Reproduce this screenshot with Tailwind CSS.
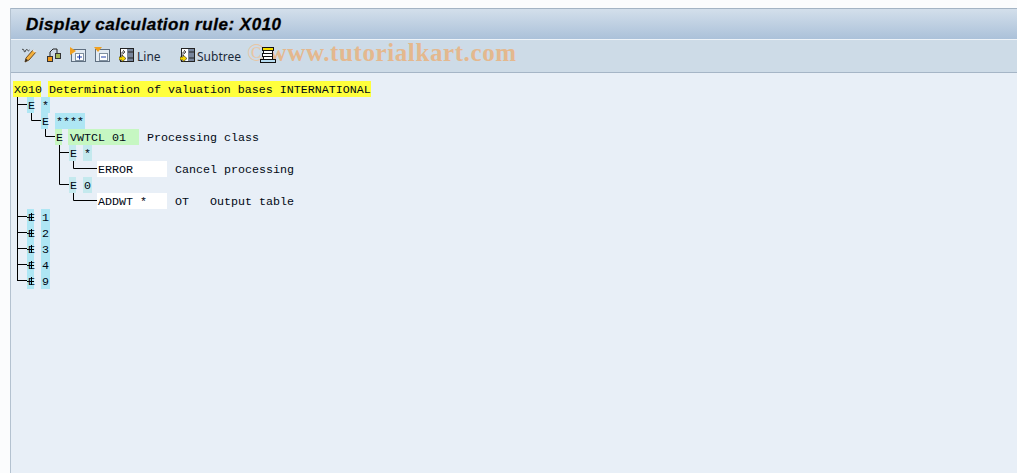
<!doctype html>
<html>
<head>
<meta charset="utf-8">
<script src="https://cdn.jsdelivr.net/npm/@tailwindcss/browser@4"></script>
</head>
<body class="bg-white overflow-hidden">
<div class="w-[1017px] h-[473px] overflow-hidden pl-[10px] pt-[8px] bg-[#fbfcfd]">
  <div class="h-[465px] flex flex-col border-l border-[#b4c2d0]">
    <div class="h-[31px] shrink-0 border-t border-[#a4b4c4] bg-gradient-to-b from-[#d3dfeb] to-[#abc1d9] pl-[15px] flex items-center">
      <span class="font-['Liberation_Sans'] font-bold italic text-[17px] tracking-[0.52px] text-black leading-none [-webkit-text-stroke:0.3px_black]">Display calculation rule: X010</span>
    </div>
    <div class="relative h-[34px] shrink-0 border-t border-[#eef3f8] border-b border-b-[#a5b5c6] bg-[#cddbe7] flex items-center pl-[11px] pb-[2px] font-['Noto_Sans'] text-[12px] text-[#1c2a3a]">
      <div class="absolute left-[236px] top-[-3px] font-['Liberation_Serif'] font-bold text-[25px] leading-[32px] tracking-[0.6px] whitespace-nowrap text-[#e4b88e]"><span class="font-normal text-[#e8c6a4] mr-[2px]">©</span>www.tutorialkart.com</div>
      <svg class="relative w-[16px] h-[16px] shrink-0" viewBox="0 0 16 16"><path d="M0 3c1-2 2 0 2 1s1.500 1 1.500 0 1-2 2-1 1 1 2 0" fill="none" stroke="#333" stroke-width="1"/><path d="M3 15l1-4 7-8 3 2-7 8z" fill="#f4b03c" stroke="#6b4a20"/><path d="M11 3l3 2" stroke="#e4e4e4" stroke-width="2"/><path d="M3 15l1-3 2 1z" fill="#222"/></svg>
      <svg class="relative w-[16px] h-[16px] shrink-0 ml-[8px]" viewBox="0 0 16 16"><path d="M4 9V5l3-3h4v4" fill="none" stroke="#222"/><rect x="1.500" y="9.500" width="5" height="5" fill="#f29a1c" stroke="#333"/><rect x="9.500" y="6.500" width="5" height="5" fill="#a3b855" stroke="#333"/></svg>
      <svg class="relative w-[16px] h-[16px] shrink-0 ml-[8px]" viewBox="0 0 16 16"><rect x="1.500" y="2.500" width="14" height="12" fill="#e3ebf3" stroke="#5f6f80"/><rect x="5.500" y="6.500" width="8" height="7" fill="#fff" stroke="#8090a0"/><path d="M9.500 7.500v5M7 10h5" stroke="#1f3fa8"/><path d="M0 0l6 4-6 4z" fill="#f0a020"/></svg>
      <svg class="relative w-[16px] h-[16px] shrink-0 ml-[8px]" viewBox="0 0 16 16"><rect x="1.500" y="2.500" width="14" height="12" fill="#e3ebf3" stroke="#5f6f80"/><rect x="5.500" y="6.500" width="8" height="7" fill="#fff" stroke="#8090a0"/><path d="M7 10h5" stroke="#1f3fa8"/><path d="M0 0h8l-4 5z" fill="#f0a020"/></svg>
      <svg class="relative w-[16px] h-[16px] shrink-0 ml-[9px]" viewBox="0 0 16 16"><rect x="1.500" y="1.500" width="13" height="13" fill="#fff" stroke="#222"/><rect x="8" y="2" width="6" height="12" fill="#77859c"/><path d="M9 5h5M9 11h5" stroke="#222"/><path d="M4 3l2 2-2 2M3 9V5h2" fill="none" stroke="#555"/><path d="M0 10h3V8l4 3.500-4 3.500v-2H0z" fill="#f5d400" stroke="#222" stroke-width=".6"/></svg>
      <span class="relative top-[2px] ml-[2px] w-[42px] leading-none">Line</span>
      <svg class="relative w-[16px] h-[16px] shrink-0 ml-[1px]" viewBox="0 0 16 16"><rect x="1.500" y="1.500" width="13" height="13" fill="#fff" stroke="#222"/><rect x="8" y="2" width="6" height="12" fill="#77859c"/><path d="M9 5h5M9 11h5" stroke="#222"/><path d="M4 3l2 2-2 2M3 9V5h2" fill="none" stroke="#555"/><path d="M0 10h3V8l4 3.500-4 3.500v-2H0z" fill="#f5d400" stroke="#222" stroke-width=".6"/></svg>
      <span class="relative top-[2px] ml-[1px] w-[62px] leading-none">Subtree</span>
      <svg class="relative w-[16px] h-[16px] shrink-0 ml-[1px]" viewBox="0 0 16 16"><rect x="2.500" y=".5" width="11" height="3" fill="#f5dc00" stroke="#111"/><rect x="3.500" y="3.500" width="9" height="3" fill="#fff" stroke="#111"/><rect x="2.500" y="6.500" width="10" height="3" fill="#fff" stroke="#111"/><rect x="3.500" y="9.500" width="9" height="3" fill="#fff" stroke="#111"/><rect x=".5" y="12.500" width="15" height="3" fill="#b8dcf0" stroke="#111"/></svg>
    </div>
    <div class="relative flex-1 bg-[#e8eff7] pt-[8px] font-['Liberation_Mono'] text-[11.67px] leading-[18px] text-[#000814]">
      <svg class="absolute left-0 top-0 w-[120px] h-[220px]" viewBox="0 0 120 220" fill="none" stroke="#000"><path d="M6.500 23.500V208M6.500 31.500H16M6.500 143.500H16M6.500 159.500H16M6.500 175.500H16M6.500 191.500H16M6.500 207.500H16M20.500 40V47.500H30M34.500 56V63.500H44M48.500 72V111.500H58M48.500 79.500H58M62.500 88V95.500H86M62.500 120V127.500H86"/></svg>
      <div class="relative h-[16px] flex ml-[2px]"><span class="w-[28px] pl-px bg-[#ffff3c] whitespace-nowrap">X010</span><span class="ml-[7px] w-[323px] pl-px bg-[#ffff3c]">Determination of valuation bases INTERNATIONAL</span></div>
      <div class="relative h-[16px] flex ml-[16px]"><span class="w-[7px] pl-px bg-[#aee6f4]">E</span><span class="ml-[7px] w-[9px] pl-[1px] bg-[#aee6f4]">*</span></div>
      <div class="relative h-[16px] flex ml-[30px]"><span class="w-[7px] pl-px bg-[#aee6f4]">E</span><span class="ml-[7px] w-[30px] pl-[1px] bg-[#aee6f4]">****</span></div>
      <div class="relative h-[16px] flex ml-[44px]"><span class="w-[7px] pl-px bg-[#c6f7c2]">E</span><span class="ml-[6px] w-[71px] pl-[2px] bg-[#c6f7c2]">VWTCL 01</span><span class="ml-[8px]">Processing class</span></div>
      <div class="relative h-[16px] flex ml-[58px]"><span class="w-[7px] pl-px bg-[#c4e9ee]">E</span><span class="ml-[7px] w-[9px] pl-[1px] bg-[#c4e9ee]">*</span></div>
      <div class="relative h-[16px] flex ml-[86px]"><span class="w-[70px] pl-[1px] bg-white">ERROR</span><span class="ml-[8px]">Cancel processing</span></div>
      <div class="relative h-[16px] flex ml-[58px]"><span class="w-[7px] pl-px bg-[#c4e9ee]">E</span><span class="ml-[7px] w-[9px] pl-[1px] bg-[#c4e9ee]">0</span></div>
      <div class="relative h-[16px] flex ml-[86px]"><span class="w-[70px] pl-[1px] bg-white">ADDWT *</span><span class="ml-[8px] whitespace-pre">OT   Output table</span></div>
      <div class="relative h-[16px] flex ml-[16px]"><span class="relative w-[7px] pl-px bg-[#aee6f4]">E<i class="absolute left-0 top-[8px] w-[7px] h-px bg-black"></i><i class="absolute left-[4px] top-[4px] w-px h-[8px] bg-black"></i></span><span class="ml-[7px] w-[9px] pl-[1px] bg-[#aee6f4]">1</span></div>
      <div class="relative h-[16px] flex ml-[16px]"><span class="relative w-[7px] pl-px bg-[#aee6f4]">E<i class="absolute left-0 top-[8px] w-[7px] h-px bg-black"></i><i class="absolute left-[4px] top-[4px] w-px h-[8px] bg-black"></i></span><span class="ml-[7px] w-[9px] pl-[1px] bg-[#aee6f4]">2</span></div>
      <div class="relative h-[16px] flex ml-[16px]"><span class="relative w-[7px] pl-px bg-[#aee6f4]">E<i class="absolute left-0 top-[8px] w-[7px] h-px bg-black"></i><i class="absolute left-[4px] top-[4px] w-px h-[8px] bg-black"></i></span><span class="ml-[7px] w-[9px] pl-[1px] bg-[#aee6f4]">3</span></div>
      <div class="relative h-[16px] flex ml-[16px]"><span class="relative w-[7px] pl-px bg-[#aee6f4]">E<i class="absolute left-0 top-[8px] w-[7px] h-px bg-black"></i><i class="absolute left-[4px] top-[4px] w-px h-[8px] bg-black"></i></span><span class="ml-[7px] w-[9px] pl-[1px] bg-[#aee6f4]">4</span></div>
      <div class="relative h-[16px] flex ml-[16px]"><span class="relative w-[7px] pl-px bg-[#aee6f4]">E<i class="absolute left-0 top-[8px] w-[7px] h-px bg-black"></i><i class="absolute left-[4px] top-[4px] w-px h-[8px] bg-black"></i></span><span class="ml-[7px] w-[9px] pl-[1px] bg-[#aee6f4]">9</span></div>
    </div>
  </div>
</div>
</body>
</html>
